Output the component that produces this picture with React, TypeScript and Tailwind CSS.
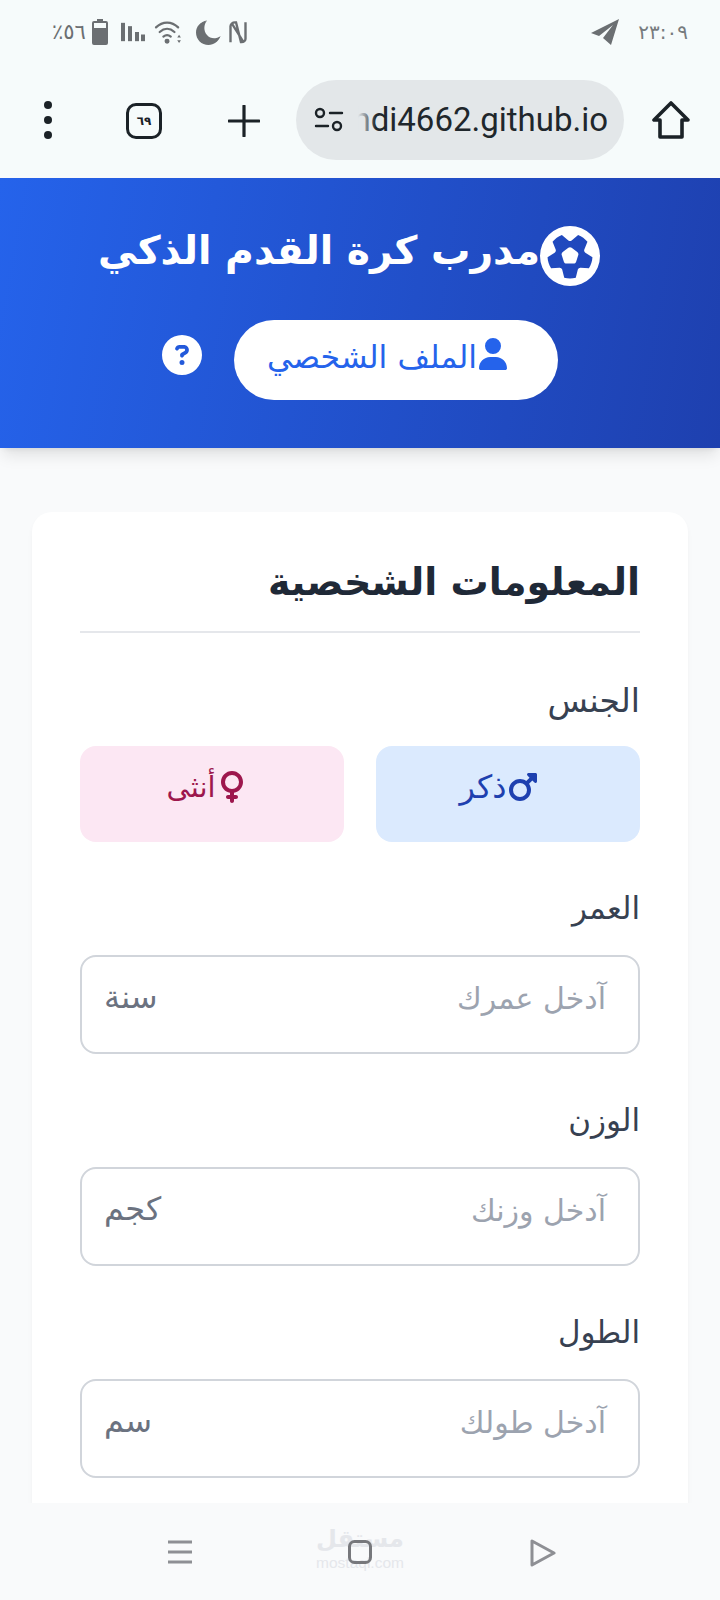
import { FaFutbol, FaUser, FaCircleQuestion, FaMars, FaVenus } from "react-icons/fa6";

const font = { fontFamily: '"DejaVu Sans", "Noto Sans", sans-serif' };

function Field({ label, placeholder, unit }: { label: string; placeholder: string; unit: string }) {
  return (
    <div className="mb-[48px]">
      <div className="text-[31px] leading-[36px] text-[#374151] mb-[29px]">{label}</div>
      <div className="h-[99px] rounded-[16px] border-2 border-[#d1d5db] bg-white flex items-start justify-between pl-[22px] pr-[32px] pt-[24px] text-[30px] leading-[36px]">
        <span className="text-[#9ca3af]">{placeholder}</span>
        <span className="text-[#6b7280] text-[32px] -mt-[2px]">{unit}</span>
      </div>
    </div>
  );
}

export default function App() {
  return (
    <div dir="ltr" style={font} className="w-[720px] h-[1600px] bg-[#f9fafb] flex flex-col overflow-hidden">
      <div className="h-[176px] bg-[#f6fbfb] shrink-0 flex flex-col">
        <div className="h-[64px] pt-[19px] pl-[52px] pr-[32px] flex items-start justify-between text-[#6b6f72]">
          <div className="flex items-center h-[26px]">
            <span className="text-[21px] leading-[24px]">٪٥٦</span>
            <svg width="16" height="26" viewBox="0 0 16 26" className="ml-[6px]"><path d="M5 0h6v2h3a2 2 0 0 1 2 2v20a2 2 0 0 1-2 2H2a2 2 0 0 1-2-2V4a2 2 0 0 1 2-2h3z" fill="#6b6f72" /><rect x="2" y="4" width="12" height="5" fill="#f6fbfb" /></svg>
            <svg width="24" height="20" viewBox="0 0 24 24" preserveAspectRatio="none" fill="#6b6f72" className="ml-[13px]"><rect x="0" y="1" width="4" height="22" /><rect x="7" y="5" width="4" height="18" /><rect x="14" y="12" width="4" height="11" /><rect x="20" y="15" width="4" height="8" /></svg>
            <svg width="30" height="24" viewBox="0 0 30 26" fill="none" stroke="#6b6f72" strokeWidth="2.4" strokeLinecap="round" className="ml-[8px]"><path d="M2 8c7-7 17-7 24 0M6 13c5-4.500 11-4.500 16 0M10 18c3-2.500 5-2.500 8 0" /><circle cx="14" cy="23" r="1.500" fill="#6b6f72" /><path d="M27 16l2 3h-4zM27 25l2-3h-4z" fill="#6b6f72" stroke="none" /></svg>
            <svg width="25" height="25" viewBox="0 0 25 25" fill="#6b6f72" className="ml-[13px]"><path d="M11 0.500C6 3 4 8 6 13c2 5 8 7.500 13 6 2-.5 4-1.500 5.500-3C22.500 21.500 18 25 12.500 25 5.500 25 0 19.500 0 12.500 0 6.500 4.500 1.500 11 0.500z" /><path d="M11 0.500C7.500 5 7.500 11 11 15c3 3.500 8 4.500 13.500 1.500L20 22 8 23 1 14 4 4z" /></svg>
            <svg width="18" height="23" viewBox="0 0 18 26" preserveAspectRatio="none" fill="none" stroke="#6b6f72" strokeWidth="2.400" className="ml-[8px]"><path d="M1.500 24V6a4.500 4.500 0 0 1 4.500-4.500h1L12 24h0.500a4 4 0 0 0 4-4V1.500M3 3l11 20" /></svg>
          </div>
          <div className="flex items-center gap-[17px]">
            <svg width="30" height="26" viewBox="0 0 30 26" fill="#6b6f72"><path d="M28 0 0 14l8 3L22 6 12 19l8 7z" /></svg>
            <span className="text-[20px] leading-[24px] text-[#777b7e]">٢٣:٠٩</span>
          </div>
        </div>
        <div className="flex-1 flex items-start pl-[42px] pt-[16px]">
          <svg width="12" height="40" viewBox="0 0 12 40" className="mt-[20px]" fill="#1b2227"><circle cx="6" cy="5" r="4" /><circle cx="6" cy="20" r="4" /><circle cx="6" cy="35" r="4" /></svg>
          <div className="mt-[23px] ml-[72px] w-[36px] h-[36px] rounded-[10px] border-[3px] border-[#1b2227] flex items-center justify-center text-[12px] font-bold text-[#1b2227]">٦٩</div>
          <svg width="32" height="32" viewBox="0 0 32 32" className="mt-[25px] ml-[66px]" stroke="#1b2227" strokeWidth="3.200" strokeLinecap="round"><path d="M16 1v30M1 16h30" /></svg>
          <div className="ml-[36px] w-[328px] h-[80px] rounded-[40px] bg-[#e3e7e9] flex items-center pl-[18px] overflow-hidden relative shrink-0">
            <svg width="30" height="28" viewBox="0 0 30 28" fill="none" stroke="#1b2227" strokeWidth="2.400" strokeLinecap="round" className="shrink-0"><circle cx="6" cy="7" r="4" /><path d="M16 7h12M2 20h12" /><circle cx="23" cy="20" r="4" /></svg>
            <span className="ml-[14px] w-[250px] text-[33px] leading-[36px] text-[#1f272c] whitespace-nowrap flex justify-end overflow-hidden" style={{ fontFamily: '"Roboto", sans-serif' }}>hdi4662.github.io</span>
            <div className="absolute left-[62px] top-[20px] h-[40px] w-[18px] bg-[linear-gradient(90deg,#e3e7e9,rgba(227,231,233,0))]" />
          </div>
          <svg width="38" height="38" viewBox="0 0 38 38" className="mt-[21px] ml-[28px] shrink-0" fill="none" stroke="#1b2227" strokeWidth="3.600" strokeLinejoin="round"><path d="M19 2 2 19h6v17h22V19h6z" /></svg>
        </div>
      </div>
      <div dir="rtl" className="flex-1 min-h-0 overflow-hidden">
        <header className="h-[270px] mt-[2px] bg-[linear-gradient(100deg,#2563eb,#1e40af)] shadow-[0_10px_15px_-3px_rgba(0,0,0,0.1),0_4px_6px_-4px_rgba(0,0,0,0.1)] flex flex-col items-center pt-[46px] text-white">
          <div className="flex items-center h-[60px] mr-[22px]">
            <FaFutbol size={60} className="mt-[4px]" />
            <h1 className="text-[39.300px] leading-[54px] font-bold mb-[6px]">مدرب كرة القدم الذكي</h1>
          </div>
          <div className="flex items-center gap-[32px] mt-[36px]">
            <button className="w-[324px] h-[80px] rounded-[40px] bg-white text-[#2563eb] flex items-center justify-center text-[31.500px] leading-[40px] pr-[16px]">
              <FaUser size={32} className="mb-[12px]" />
              <span className="mb-[6px]">الملف الشخصي</span>
            </button>
            <FaCircleQuestion size={40} className="mb-[10px]" />
          </div>
        </header>
        <main className="px-[32px] pt-[64px]">
          <section className="rounded-[20px] bg-white shadow-[0_4px_6px_-1px_rgba(0,0,0,0.05)] px-[48px] pt-[42px] pb-[40px]">
            <h2 className="text-[38px] leading-[56px] font-bold text-[#1f2937] pb-[21px] border-b-2 border-[#e5e7eb]">المعلومات الشخصية</h2>
            <div className="text-[33px] leading-[36px] text-[#374151] mt-[50px]">الجنس</div>
            <div className="grid grid-cols-2 gap-[32px] mt-[27px] mb-[48px]">
              <div className="h-[96px] rounded-[16px] bg-[#dbeafe] text-[#1e40af] flex items-center justify-center text-[32px] leading-[40px] pb-[14px] pr-[18px]"><FaMars size={32} /><span>ذكر</span></div>
              <div className="h-[96px] rounded-[16px] bg-[#fce7f3] text-[#9d174d] flex items-center justify-center text-[29px] leading-[40px] pb-[14px] pr-[10px]"><FaVenus size={32} /><span>أنثى</span></div>
            </div>
            <Field label="العمر" placeholder="آدخل عمرك" unit="سنة" />
            <Field label="الوزن" placeholder="آدخل وزنك" unit="كجم" />
            <Field label="الطول" placeholder="آدخل طولك" unit="سم" />
          </section>
        </main>
      </div>
      <nav className="h-[97px] bg-[#f9fafb] shrink-0 flex items-start pl-[168px] pt-[37px] relative">
        <svg width="24" height="24" viewBox="0 0 24 24" stroke="#8e8f94" strokeWidth="3"><path d="M0 2h24M0 12h24M0 22h24" /></svg>
        <div className="absolute left-[306px] top-[20px] w-[108px] flex flex-col items-center text-[#e5e7eb] leading-none">
          <span className="text-[24px] leading-[32px] font-bold">مستقل</span>
          <span className="text-[15.500px] leading-[16px]" style={{ fontFamily: '"Liberation Sans", sans-serif' }}>mostaql.com</span>
        </div>
        <svg width="24" height="24" viewBox="0 0 24 24" fill="none" stroke="#77787c" strokeWidth="3" className="relative ml-[156px]"><rect x="1.500" y="1.500" width="21" height="21" rx="5" /></svg>
        <svg width="26" height="28" viewBox="0 0 26 28" fill="none" stroke="#8e8f94" strokeWidth="3" strokeLinejoin="round" className="ml-[158px] -mt-[1px]"><path d="M2 2v24l22-12z" /></svg>
      </nav>
    </div>
  );
}
